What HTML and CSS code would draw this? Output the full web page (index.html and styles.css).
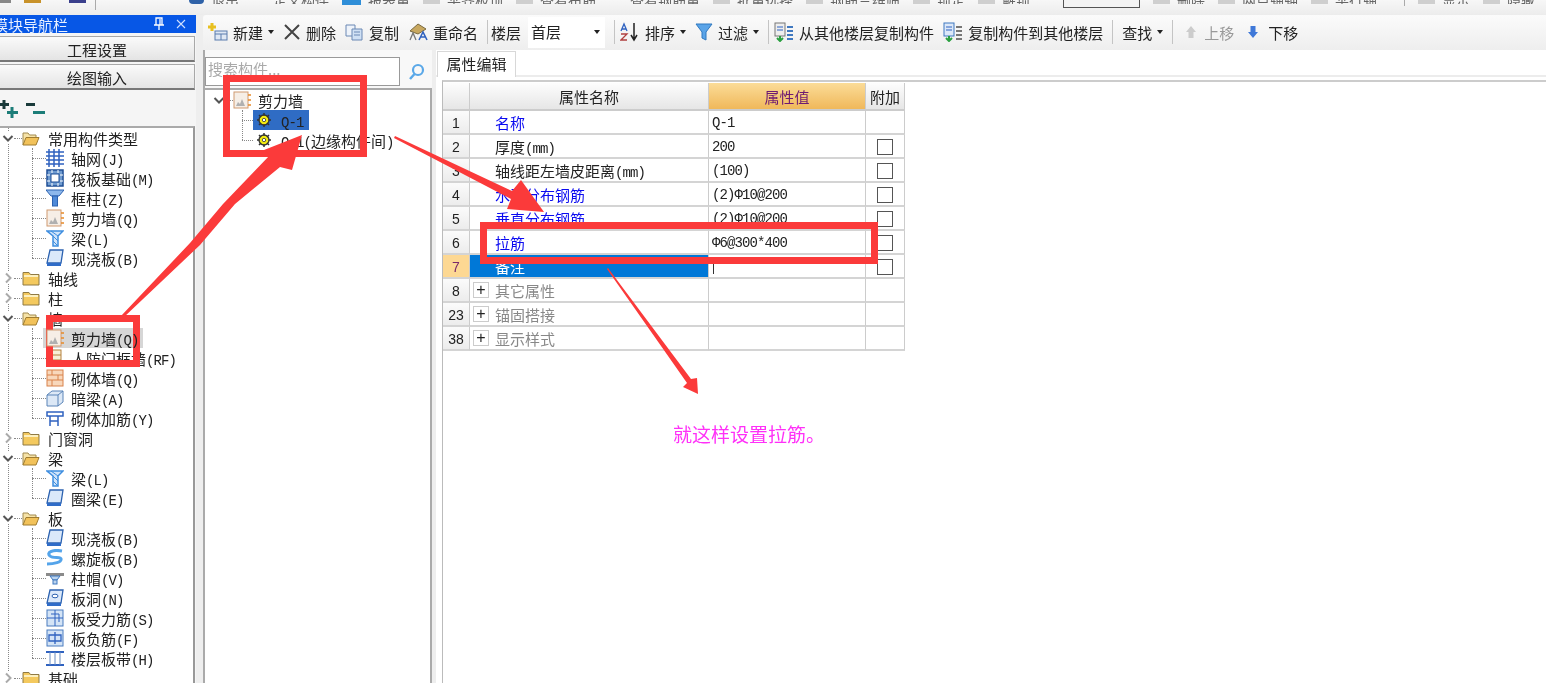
FILE: index.html
```html
<!DOCTYPE html>
<html lang="zh-CN">
  <head>
    <meta charset="UTF-8" />
    <title>模块导航栏</title>
    <link rel="stylesheet" href="styles.css">
  </head>
  <body>
    <svg class="defs" width="0" height="0">
      <symbol id="folder-open" viewBox="0 0 18 18">
        <path d="M1 16V4h5l1.500 2H14v3" fill="#f6e3a8" stroke="#a08a50"/>
        <path d="M1 16 4 8.500h13L14 16z" fill="#f2c25a" stroke="#a07c30"/>
      </symbol>
      <symbol id="folder" viewBox="0 0 18 18">
        <path d="M1 16V3.500h6L8.500 5.500H17V16z" fill="#f4c95e" stroke="#8f7a45"/>
        <path d="M2 7h14" stroke="#fdf0c0" stroke-width="2"/>
      </symbol>
      <symbol id="grid" viewBox="0 0 18 18">
        <path d="M0 3h18M0 7h18M0 11h18M0 15h18M3 0v18M8 0v18M13 0v18" stroke="#2f62c0" stroke-width="1.500" fill="none"/>
      </symbol>
      <symbol id="raft" viewBox="0 0 18 18">
        <rect x="1" y="1" width="16" height="16" fill="#6f9bd0" stroke="#1f4f96" stroke-width="1.500"/>
        <rect x="5" y="5" width="8" height="8" fill="#fff" stroke="#1f4f96"/>
        <path d="M1 6h3M1 12h3M14 6h3M14 12h3M6 1v3M12 1v3M6 14v3M12 14v3" stroke="#fff"/>
      </symbol>
      <symbol id="column" viewBox="0 0 18 18">
        <path d="M0 1h18l-5 6H5z" fill="#8db8ec" stroke="#2c62b0"/>
        <rect x="6.500" y="7" width="5" height="10" fill="#4f8ad8" stroke="#2c62b0"/>
      </symbol>
      <symbol id="wall" viewBox="0 0 18 18">
        <rect x="1" y="1" width="14" height="16" fill="#f6eee6" stroke="#d09a70"/>
        <path d="M3 15l2-4 2 2 2-5 3 7z" fill="#b0b0b0"/>
        <path d="M15 4h3M15 9h3M15 14h3" stroke="#e88a2a" stroke-width="1.500"/>
      </symbol>
      <symbol id="beam" viewBox="0 0 18 18">
        <path d="M1 2h16l-5 5v10H7V7z" fill="#cfe4fa" stroke="#3f8ee0" stroke-width="1.500"/>
        <path d="M7 7l5 5M7 12l5 5M5 2l7 5" stroke="#3f8ee0"/>
      </symbol>
      <symbol id="slab" viewBox="0 0 18 18">
        <path d="M4 1h13l-2 13H1z" fill="#dbe9fa" stroke="#2c62b0" stroke-width="1.300"/>
        <path d="M1 14h14v3H1z" fill="#2f6cc8"/>
      </symbol>
      <symbol id="door" viewBox="0 0 18 18">
        <rect x="3" y="1" width="12" height="16" fill="#f8efd8" stroke="#b5823e"/>
        <path d="M3 6h12M3 11h12" stroke="#b5823e"/>
      </symbol>
      <symbol id="brick" viewBox="0 0 18 18">
        <rect x="1" y="1" width="16" height="16" fill="#f8d8bc" stroke="#d9824a"/>
        <path d="M1 6h16M1 11h16M6 1v5M12 6v5M6 11v6" stroke="#d9824a"/>
      </symbol>
      <symbol id="dark-beam" viewBox="0 0 18 18">
        <path d="M1 6l5-4h11v11l-5 4H1z" fill="#dce8f6" stroke="#5a84b8"/>
        <path d="M1 6h11v11M12 6l5-4" fill="none" stroke="#5a84b8"/>
      </symbol>
      <symbol id="masonry" viewBox="0 0 18 18">
        <path d="M1 3h16v4H1zM4 7v10M12 7v10M4 12h8" fill="none" stroke="#2f62c0" stroke-width="1.500"/>
      </symbol>
      <symbol id="spiral" viewBox="0 0 18 18">
        <path d="M16 2C6 0 0 4 4 7c3 3 11 0 11 3 1 3-7 5-14 5" fill="none" stroke="#54a4ea" stroke-width="3"/>
      </symbol>
      <symbol id="cap" viewBox="0 0 18 18">
        <rect x="0" y="4" width="18" height="3" fill="#8a8a8a"/>
        <path d="M4 7h10l-3 4H7z" fill="#bcd4ee" stroke="#3f78c0"/>
        <rect x="7" y="11" width="4" height="4" fill="#bcd4ee" stroke="#3f78c0"/>
      </symbol>
      <symbol id="hole" viewBox="0 0 18 18">
        <path d="M4 1h13l-2 13H1z" fill="#dbe9fa" stroke="#2c62b0" stroke-width="1.300"/>
        <path d="M1 14h14v3H1z" fill="#2f6cc8"/>
        <ellipse cx="9" cy="7" rx="3" ry="1.800" fill="#fff" stroke="#2c62b0"/>
      </symbol>
      <symbol id="slab-bar" viewBox="0 0 18 18">
        <rect x="1" y="1" width="16" height="16" fill="#d4e4f6" stroke="#4a7cc0"/>
        <path d="M1 9h16M9 1v16M5 5h8v8" fill="none" stroke="#2f62c0"/>
      </symbol>
      <symbol id="neg-bar" viewBox="0 0 18 18">
        <rect x="1" y="1" width="16" height="16" fill="#d4e4f6" stroke="#4a7cc0"/>
        <path d="M3 6h12v6H3zM9 3v12" fill="none" stroke="#2f62c0" stroke-width="1.300"/>
      </symbol>
      <symbol id="band" viewBox="0 0 18 18">
        <path d="M0 3h18M0 16h18" stroke="#2f62c0" stroke-width="2"/>
        <path d="M4 3v13M9 3v13M14 3v13" stroke="#6a8cc0"/>
      </symbol>
      <symbol id="gear" viewBox="0 0 14 14">
        <circle cx="7" cy="7" r="5" fill="#f2ea10" stroke="#333" stroke-width="1.300"/>
        <circle cx="7" cy="7" r="1.700" fill="#fff" stroke="#333" stroke-width=".8"/>
        <path d="M7 0v2.500M7 11.500V14M0 7h2.500M11.500 7H14M2 2l2 2M10 10l2 2M12 2l-2 2M4 10l-2 2" stroke="#333" stroke-width="1.500"/>
      </symbol>
      <symbol id="open-chev" viewBox="0 0 12 12">
        <path d="M1.500 4 6 8.500 10.500 4" fill="none" stroke="#555" stroke-width="2"/>
      </symbol>
      <symbol id="shut-chev" viewBox="0 0 12 12">
        <path d="M4 1.500 8.500 6 4 10.500" fill="none" stroke="#aaa" stroke-width="2"/>
      </symbol>
    </svg>

    <div class="app">
      <!-- 顶部工具栏，只露出底边 -->
      <div class="strip">
        <i class="chip chip-gray"></i>
        <i class="chip chip-amber"></i>
        <i class="chip chip-navy"></i>
        <i class="strip-sep"></i>
        <i class="chip chip-swoosh"></i>
        <span class="strip-text">退出</span>
        <span class="strip-text far">定义构件</span>
        <i class="chip chip-blue"></i>
        <span class="strip-text">报表量</span>
        <i class="chip chip-pale"></i>
        <span class="strip-text">平齐板顶</span>
        <i class="chip chip-pale"></i>
        <span class="strip-text">查看布筋</span>
        <span class="strip-text far">查看钢筋量</span>
        <i class="chip chip-pale"></i>
        <span class="strip-text">批量选择</span>
        <i class="chip chip-pale"></i>
        <span class="strip-text">钢筋三维筛</span>
        <i class="chip chip-pale"></i>
        <span class="strip-text">锁定</span>
        <i class="chip chip-pale"></i>
        <span class="strip-text">解锁</span>
        <span class="strip-combo"></span>
        <i class="chip chip-pale"></i>
        <span class="strip-text">删除</span>
        <i class="chip chip-pale"></i>
        <span class="strip-text">两点辅轴</span>
        <i class="chip chip-pale"></i>
        <span class="strip-text">平行辅</span>
        <i class="strip-sep strip-sep-far"></i>
        <i class="chip chip-pale"></i>
        <span class="strip-text">显示</span>
        <i class="chip chip-pale"></i>
        <span class="strip-text">隐藏</span>
      </div>

      <div class="main">
        <!-- 模块导航栏 -->
        <div class="nav">
          <div class="nav-title">
            <span class="nav-name">模块导航栏</span>
            <span class="nav-pin">
              <svg width="12" height="14" viewBox="0 0 12 14"><path d="M3 1h6v7H3zM1 8h10M6 8v5M7 2v6" fill="none" stroke="#fff" stroke-width="1.300"/></svg>
            </span>
            <span class="nav-close">
              <svg width="10" height="10" viewBox="0 0 10 10"><path d="M1 1l8 8M9 1l-8 8" stroke="#cfe0ff" stroke-width="1.100"/></svg>
            </span>
          </div>
          <div class="nav-btn">工程设置</div>
          <div class="nav-btn">绘图输入</div>
          <div class="nav-icons">
            <svg width="18" height="18" viewBox="0 0 18 18"><path d="M4 0v9M0 4.500h9" stroke="#1a3a3a" stroke-width="3"/><path d="M12 7v11M7 12.500h11" stroke="#1c7d78" stroke-width="3"/></svg>
            <svg width="20" height="18" viewBox="0 0 20 18"><path d="M1 4.500h9" stroke="#1a3a3a" stroke-width="3"/><path d="M8 12.500h12" stroke="#1c7d78" stroke-width="3"/></svg>
          </div>

          <div class="tree tree-root">
            <div class="row"><svg class="chev"><use href="#open-chev"/></svg><i class="dash"></i><svg class="ico"><use href="#folder-open"/></svg><span class="label">常用构件类型</span></div>
            <div class="kids">
              <div class="leaf"><i class="stem"></i><svg class="ico"><use href="#grid"/></svg><span class="label">轴网<b>(J)</b></span></div>
              <div class="leaf"><i class="stem"></i><svg class="ico"><use href="#raft"/></svg><span class="label">筏板基础<b>(M)</b></span></div>
              <div class="leaf"><i class="stem"></i><svg class="ico"><use href="#column"/></svg><span class="label">框柱<b>(Z)</b></span></div>
              <div class="leaf"><i class="stem"></i><svg class="ico"><use href="#wall"/></svg><span class="label">剪力墙<b>(Q)</b></span></div>
              <div class="leaf"><i class="stem"></i><svg class="ico"><use href="#beam"/></svg><span class="label">梁<b>(L)</b></span></div>
              <div class="leaf"><i class="stem"></i><svg class="ico"><use href="#slab"/></svg><span class="label">现浇板<b>(B)</b></span></div>
            </div>
            <div class="row"><svg class="chev"><use href="#shut-chev"/></svg><i class="dash"></i><svg class="ico"><use href="#folder"/></svg><span class="label">轴线</span></div>
            <div class="row"><svg class="chev"><use href="#shut-chev"/></svg><i class="dash"></i><svg class="ico"><use href="#folder"/></svg><span class="label">柱</span></div>
            <div class="row"><svg class="chev"><use href="#open-chev"/></svg><i class="dash"></i><svg class="ico"><use href="#folder-open"/></svg><span class="label">墙</span></div>
            <div class="kids">
              <div class="leaf leaf-hover"><i class="stem"></i><svg class="ico"><use href="#wall"/></svg><span class="label">剪力墙<b>(Q)</b></span></div>
              <div class="leaf"><i class="stem"></i><svg class="ico"><use href="#door"/></svg><span class="label">人防门框墙<b>(RF)</b></span></div>
              <div class="leaf"><i class="stem"></i><svg class="ico"><use href="#brick"/></svg><span class="label">砌体墙<b>(Q)</b></span></div>
              <div class="leaf"><i class="stem"></i><svg class="ico"><use href="#dark-beam"/></svg><span class="label">暗梁<b>(A)</b></span></div>
              <div class="leaf"><i class="stem"></i><svg class="ico"><use href="#masonry"/></svg><span class="label">砌体加筋<b>(Y)</b></span></div>
            </div>
            <div class="row"><svg class="chev"><use href="#shut-chev"/></svg><i class="dash"></i><svg class="ico"><use href="#folder"/></svg><span class="label">门窗洞</span></div>
            <div class="row"><svg class="chev"><use href="#open-chev"/></svg><i class="dash"></i><svg class="ico"><use href="#folder-open"/></svg><span class="label">梁</span></div>
            <div class="kids">
              <div class="leaf"><i class="stem"></i><svg class="ico"><use href="#beam"/></svg><span class="label">梁<b>(L)</b></span></div>
              <div class="leaf"><i class="stem"></i><svg class="ico"><use href="#slab"/></svg><span class="label">圈梁<b>(E)</b></span></div>
            </div>
            <div class="row"><svg class="chev"><use href="#open-chev"/></svg><i class="dash"></i><svg class="ico"><use href="#folder-open"/></svg><span class="label">板</span></div>
            <div class="kids">
              <div class="leaf"><i class="stem"></i><svg class="ico"><use href="#slab"/></svg><span class="label">现浇板<b>(B)</b></span></div>
              <div class="leaf"><i class="stem"></i><svg class="ico"><use href="#spiral"/></svg><span class="label">螺旋板<b>(B)</b></span></div>
              <div class="leaf"><i class="stem"></i><svg class="ico"><use href="#cap"/></svg><span class="label">柱帽<b>(V)</b></span></div>
              <div class="leaf"><i class="stem"></i><svg class="ico"><use href="#hole"/></svg><span class="label">板洞<b>(N)</b></span></div>
              <div class="leaf"><i class="stem"></i><svg class="ico"><use href="#slab-bar"/></svg><span class="label">板受力筋<b>(S)</b></span></div>
              <div class="leaf"><i class="stem"></i><svg class="ico"><use href="#neg-bar"/></svg><span class="label">板负筋<b>(F)</b></span></div>
              <div class="leaf"><i class="stem"></i><svg class="ico"><use href="#band"/></svg><span class="label">楼层板带<b>(H)</b></span></div>
            </div>
            <div class="row"><svg class="chev"><use href="#shut-chev"/></svg><i class="dash"></i><svg class="ico"><use href="#folder"/></svg><span class="label">基础</span></div>
          </div>
        </div>

        <div class="content">
          <!-- 构件工具栏 -->
          <div class="toolbar">
            <span class="tool">
              <svg width="20" height="20" viewBox="0 0 20 20"><path d="M4 1v8M0 5h8" stroke="#e8c020" stroke-width="3"/><rect x="7" y="9" width="12" height="9" fill="#dfe8f4" stroke="#5a7cae"/><path d="M7 12h12M13 12v6" stroke="#5a7cae"/></svg>
              新建<i class="caret"></i>
            </span>
            <span class="tool">
              <svg width="18" height="18" viewBox="0 0 18 18"><path d="M2 2l14 14M16 2L2 16" stroke="#444" stroke-width="2"/></svg>
              删除
            </span>
            <span class="tool">
              <svg width="19" height="18" viewBox="0 0 19 18"><path d="M1 2h9v11H1z" fill="#eef3fa" stroke="#6a88b4"/><path d="M7 6h10v11H7z" fill="#cfe0f4" stroke="#6a88b4"/><path d="M9 9h6M9 12h6" stroke="#6a88b4"/></svg>
              复制
            </span>
            <span class="tool">
              <svg width="20" height="20" viewBox="0 0 20 20"><path d="M2 9l8-7 8 5-8 5z" fill="#c8a860" stroke="#7a6a40"/><path d="M2 18l3-7 3 7" fill="none" stroke="#777" stroke-width="1.300"/><path d="M11 18l4-8 4 8M12.500 15h5" fill="none" stroke="#2f62c0" stroke-width="1.600"/></svg>
              重命名
            </span>
            <i class="tool-sep"></i>
            <span class="floor-label">楼层</span>
            <span class="combo"><span>首层</span><i class="caret"></i></span>
            <i class="tool-sep"></i>
            <span class="tool">
              <svg width="20" height="20" viewBox="0 0 20 20"><path d="M1 9l3-7 3 7M2 7h4" fill="none" stroke="#2f62c0" stroke-width="1.300"/><path d="M1 12h6l-6 6h6" fill="none" stroke="#b04040" stroke-width="1.300"/><path d="M14 1v16M11 13l3 5 3-5" fill="none" stroke="#222" stroke-width="1.500"/></svg>
              排序<i class="caret"></i>
            </span>
            <span class="tool">
              <svg width="18" height="18" viewBox="0 0 18 18"><path d="M1 1h16l-6 8v8l-4-2V9z" fill="#5aa4e8" stroke="#2f78c0"/></svg>
              过滤<i class="caret"></i>
            </span>
            <i class="tool-sep"></i>
            <span class="tool">
              <svg width="20" height="20" viewBox="0 0 20 20"><rect x="1" y="1" width="10" height="13" fill="#eee" stroke="#777"/><path d="M3 5h6M3 8h6" stroke="#2f62c0"/><path d="M6 14v5M3 16l3 3 3-3" fill="none" stroke="#2aa040" stroke-width="2"/><path d="M13 5h6M13 9h6M13 13h6M13 17h6" stroke="#3f78c0" stroke-width="2"/></svg>
              从其他楼层复制构件
            </span>
            <span class="tool">
              <svg width="20" height="20" viewBox="0 0 20 20"><rect x="1" y="1" width="10" height="13" fill="#dce8f8" stroke="#3f78c0"/><path d="M3 5h6M3 8h6" stroke="#2f62c0"/><path d="M6 14v5M3 16l3 3 3-3" fill="none" stroke="#2aa040" stroke-width="2"/><path d="M13 5h6M13 9h6M13 13h6M13 17h6" stroke="#777" stroke-width="2"/></svg>
              复制构件到其他楼层
            </span>
            <i class="tool-sep"></i>
            <span class="tool tool-find">查找<i class="caret"></i></span>
            <i class="tool-sep"></i>
            <span class="tool tool-up">
              <svg width="14" height="14" viewBox="0 0 14 14"><path d="M7 1l5 6H9.500v6h-5V7H2z" fill="#ccc"/></svg>
              上移
            </span>
            <span class="tool tool-down">
              <svg width="14" height="14" viewBox="0 0 14 14"><path d="M7 13l5-6H9.500V1h-5v6H2z" fill="#3f78d8"/></svg>
              下移
            </span>
          </div>

          <div class="panes">
            <!-- 构件列表 -->
            <div class="comp">
              <div class="search">
                <span class="search-box">搜索构件...</span>
                <svg width="18" height="18" viewBox="0 0 18 18"><circle cx="10" cy="7" r="5" fill="none" stroke="#5aa8e8" stroke-width="2.200"/><path d="M6.500 11L2 16" stroke="#5aa8e8" stroke-width="2.500"/></svg>
              </div>
              <div class="tree comp-tree">
                <div class="row"><svg class="chev"><use href="#open-chev"/></svg><i class="dash"></i><svg class="ico"><use href="#wall"/></svg><span class="label">剪力墙</span></div>
                <div class="comp-kids">
                  <div class="comp-leaf"><i class="stem"></i><span class="comp-item comp-on"><svg class="gear"><use href="#gear"/></svg><span class="label"><b>Q-1</b></span></span></div>
                  <div class="comp-leaf"><i class="stem"></i><span class="comp-item"><svg class="gear"><use href="#gear"/></svg><span class="label"><b>Q-1(</b>边缘构件间<b>)</b></span></span></div>
                </div>
              </div>
            </div>

            <!-- 属性编辑 -->
            <div class="props">
              <div class="tabs"><span class="tab">属性编辑</span></div>
              <div class="sheet">
                <table class="grid">
                  <colgroup>
                    <col class="col-no" />
                    <col class="col-name" />
                    <col class="col-val" />
                    <col class="col-add" />
                  </colgroup>
                  <tr class="head">
                    <th class="no"></th>
                    <th>属性名称</th>
                    <th class="val-head">属性值</th>
                    <th>附加</th>
                  </tr>
                  <tr>
                    <td class="no">1</td>
                    <td class="name link">名称</td>
                    <td class="val">Q-1</td>
                    <td></td>
                  </tr>
                  <tr>
                    <td class="no">2</td>
                    <td class="name">厚度<b>(mm)</b></td>
                    <td class="val">200</td>
                    <td><span class="check"></span></td>
                  </tr>
                  <tr>
                    <td class="no">3</td>
                    <td class="name">轴线距左墙皮距离<b>(mm)</b></td>
                    <td class="val">(100)</td>
                    <td><span class="check"></span></td>
                  </tr>
                  <tr>
                    <td class="no">4</td>
                    <td class="name link">水平分布钢筋</td>
                    <td class="val">(2)Φ10@200</td>
                    <td><span class="check"></span></td>
                  </tr>
                  <tr>
                    <td class="no">5</td>
                    <td class="name link">垂直分布钢筋</td>
                    <td class="val">(2)Φ10@200</td>
                    <td><span class="check"></span></td>
                  </tr>
                  <tr>
                    <td class="no">6</td>
                    <td class="name link">拉筋</td>
                    <td class="val">Φ6@300*400</td>
                    <td><span class="check"></span></td>
                  </tr>
                  <tr class="current">
                    <td class="no">7</td>
                    <td class="name">备注</td>
                    <td class="val"><i class="cursor"></i></td>
                    <td><span class="check"></span></td>
                  </tr>
                  <tr class="group">
                    <td class="no">8</td>
                    <td class="name"><span class="expand">+</span>其它属性</td>
                    <td></td>
                    <td></td>
                  </tr>
                  <tr class="group">
                    <td class="no">23</td>
                    <td class="name"><span class="expand">+</span>锚固搭接</td>
                    <td></td>
                    <td></td>
                  </tr>
                  <tr class="group">
                    <td class="no">38</td>
                    <td class="name"><span class="expand">+</span>显示样式</td>
                    <td></td>
                    <td></td>
                  </tr>
                </table>
              </div>
            </div>
          </div>
        </div>
      </div>

      <!-- 红色标注 -->
      <svg class="marks" width="1546" height="683" viewBox="0 0 1546 683">
        <g fill="none" stroke="#fb3a3a" stroke-width="7">
          <rect x="226.500" y="78.500" width="137" height="75"/>
          <rect x="49.500" y="318.500" width="87" height="45"/>
          <rect x="483.500" y="225.500" width="391" height="35"/>
        </g>
        <g fill="#fb3a3a">
          <polygon points="121,316 190,243 223,204 270,155 264,150 302,135 292,170 280,167 235,204 200,245 123,318"/>
          <polygon points="395,136 512,191 521,180 544,212 507,209 511,199 394,138"/>
          <polygon points="608,268 691,379 697,378 698,394 683,387 687,383 607,269"/>
        </g>
      </svg>
      <div class="note">就这样设置拉筋。</div>
    </div>
  </body>
</html>
```

FILE: styles.css
```css
html,
body {
  margin: 0;
  height: 100%;
  overflow: hidden;
  background: #fff;
}

body {
  font-family: "Noto Sans CJK SC", "Liberation Sans", sans-serif;
  font-size: 15px;
  color: #222;
}

.defs {
  position: absolute;
}

.app {
  position: relative;
  width: 1546px;
  height: 683px;
  overflow: hidden;
  display: flex;
  flex-direction: column;
  filter: blur(0.35px);
}

/* Top strip */
.strip {
  height: 15px;
  flex: none;
  display: flex;
  align-items: flex-start;
  gap: 7px;
  overflow: hidden;
  background: linear-gradient(to bottom, #f7f7f7, #ececec);
}

.chip {
  flex: none;
  width: 17px;
  height: 3px;
}

.chip-gray {
  width: 11px;
  background: #888;
}

.chip-amber {
  margin-left: 6px;
  background: #c8922a;
}

.chip-navy {
  margin-left: 21px;
  background: #3a3f8c;
}

.chip-swoosh {
  margin-left: 86px;
  width: 15px;
  height: 4px;
  background: #2f62a8;
  border-radius: 0 0 8px 8px;
}

.chip-blue {
  width: 19px;
  height: 5px;
  margin-left: 6px;
  background: #2f8ed8;
}

.chip-pale {
  margin-left: 6px;
  height: 4px;
  background: #cfcfcf;
}

.strip-sep {
  flex: none;
  width: 1px;
  height: 10px;
  margin-left: 2px;
  background: #aaa;
}

.strip-sep-far {
  height: 6px;
  margin-left: 20px;
}

.strip-text {
  flex: none;
  height: 4px;
  overflow: hidden;
  font-size: 14px;
  line-height: 0;
  color: #666;
}

.far {
  margin-left: 27px;
}

.strip-combo {
  flex: none;
  width: 77px;
  height: 8px;
  margin-left: 26px;
  box-sizing: border-box;
  border: 1px solid #555;
  border-top: none;
  background: #f4f4f4;
}

.main {
  flex: 1;
  display: flex;
  min-height: 0;
  background: #eeeeee;
}

b {
  font-family: "Liberation Mono", monospace;
  font-weight: normal;
  font-size: 14px;
  letter-spacing: -0.9px;
  line-height: 1;
}

/* Navigation */
.nav {
  width: 196px;
  flex: none;
  display: flex;
  flex-direction: column;
  background: #f5f5f5;
}

.nav-title {
  height: 18px;
  display: flex;
  align-items: center;
  background: #0757e6;
  color: #e8f0ff;
  overflow: hidden;
}

.nav-name {
  flex: none;
  margin-left: -7px;
  width: 160px;
  white-space: nowrap;
}

.nav-pin {
  display: flex;
  width: 18px;
}

.nav-close {
  display: flex;
  margin-left: 5px;
}

.nav-btn {
  height: 26px;
  margin: 2px 1px 0 0;
  box-sizing: border-box;
  border: 1px solid #a8a8a8;
  border-left: none;
  border-bottom: 2px solid #777;
  background: linear-gradient(to bottom, #fafafa, #e4e4e4);
  text-align: center;
  line-height: 25px;
  font-size: 15px;
}

.nav-title + .nav-btn {
  margin-top: 3px;
}

.nav-icons {
  height: 36px;
  display: flex;
  align-items: center;
  gap: 7px;
  padding-top: 2px;
  box-sizing: border-box;
}

.tree {
  flex: 1;
  position: relative;
  background: #fff;
  overflow: hidden;
}

.tree-root {
  margin-right: 1px;
  border-top: 2px solid #aaa;
  border-right: 2px solid #999;
}

/* Root guide */
.tree-root::before {
  content: "";
  position: absolute;
  left: 8px;
  top: 0;
  bottom: 0;
  border-left: 1px dotted #888;
}

.row,
.leaf,
.comp-leaf {
  height: 20px;
  display: flex;
  align-items: center;
  position: relative;
  white-space: nowrap;
}

.row {
  padding-left: 2px;
}

.chev {
  width: 12px;
  height: 12px;
  flex: none;
  background: #fff;
  position: relative;
}

.dash {
  width: 8px;
  flex: none;
  border-top: 1px dotted #888;
}

.ico {
  width: 18px;
  height: 18px;
  flex: none;
  margin-right: 8px;
}

.kids {
  position: relative;
}

.kids::before {
  content: "";
  position: absolute;
  left: 32px;
  top: 0;
  bottom: 10px;
  border-left: 1px dotted #888;
}

.leaf {
  padding-left: 32px;
}

.leaf .ico {
  margin-right: 7px;
}

.stem {
  width: 14px;
  flex: none;
  border-top: 1px dotted #888;
}

.leaf-hover::after {
  content: "";
  position: absolute;
  left: 43px;
  top: 0;
  width: 100px;
  height: 100%;
  background: #d6d6d6;
  z-index: 0;
}

.leaf-hover .ico,
.leaf-hover .label {
  position: relative;
  z-index: 1;
}

/* Toolbar */
.toolbar {
  height: 35px;
  margin-left: 7px;
  flex: none;
  display: flex;
  align-items: center;
  gap: 9px;
  padding: 0 0 1px 5px;
  box-sizing: border-box;
  border-radius: 3px 0 0 0;
  background: linear-gradient(to bottom, #fbfbfb, #eeeeee);
  white-space: nowrap;
}

.tool {
  display: flex;
  align-items: center;
  gap: 5px;
  flex: none;
}

.tool-find {
  margin-left: 4px;
}

.tool-up {
  margin-left: 6px;
  gap: 6px;
  color: #999;
}

.tool-down {
  margin-left: 3px;
  gap: 8px;
}

.tool-sep {
  width: 1px;
  height: 24px;
  flex: none;
  margin-right: -4px;
  background: #c4c4c4;
}

.floor-label {
  margin-left: -2px;
}

.caret {
  width: 0;
  height: 0;
  border: 3.5px solid transparent;
  border-top: 4px solid #222;
  border-bottom: none;
}

.combo {
  width: 77px;
  height: 31px;
  margin-left: -2px;
  box-sizing: border-box;
  display: flex;
  align-items: center;
  justify-content: space-between;
  padding: 0 5px 0 3px;
  background: #fff;
}

.combo span {
  position: relative;
  top: -1px;
}

.content {
  flex: 1;
  min-width: 0;
  display: flex;
  flex-direction: column;
}

.panes {
  flex: 1;
  display: flex;
  min-height: 0;
}

/* Component list */
.comp {
  width: 229px;
  margin-left: 7px;
  flex: none;
  display: flex;
  flex-direction: column;
  background: #f8f8f8;
  border-left: 2px solid #aaa;
  box-sizing: border-box;
}

.search {
  height: 38px;
  flex: none;
  display: flex;
  align-items: flex-end;
  gap: 8px;
  padding-bottom: 2px;
  box-sizing: border-box;
}

.search svg {
  margin-bottom: 5px;
}

.search-box {
  width: 195px;
  height: 29px;
  box-sizing: border-box;
  border: 1px solid #999;
  background: #fff;
  color: #aaa;
  line-height: 22px;
  padding-left: 2px;
}

.comp-tree {
  border: 2px solid #aaa;
  border-left: none;
  border-bottom: none;
  padding: 0 0 0 8px;
}

.comp-tree .dash {
  width: 8px;
}

.comp-tree .row {
  padding-left: 0;
}

.comp-tree .ico {
  margin-right: 7px;
}

.comp-kids {
  position: relative;
}

.comp-kids::before {
  content: "";
  position: absolute;
  left: 29px;
  top: 0;
  bottom: 10px;
  border-left: 1px dotted #888;
}

.comp-leaf {
  padding-left: 29px;
}

.comp-leaf .stem {
  width: 11px;
}

.comp-item {
  display: flex;
  align-items: center;
  height: 20px;
  padding: 0 4px;
}

.comp-on {
  width: 56px;
  box-sizing: border-box;
  background: #2f6cc4;
}

.gear {
  width: 14px;
  height: 14px;
  margin-right: 10px;
  flex: none;
}

.label {
  padding-top: 1px;
  line-height: 19px;
}

/* Properties */
.props {
  flex: 1;
  min-width: 0;
  margin-left: 4px;
  background: #fff;
  display: flex;
  flex-direction: column;
}

.tabs {
  height: 27px;
  flex: none;
  box-sizing: border-box;
  padding: 1px 0 0 1px;
  display: flex;
  border-bottom: 2px solid #ececec;
}

.tab {
  width: 79px;
  height: 26px;
  box-sizing: border-box;
  text-align: center;
  line-height: 24px;
  background: #fff;
  border: 1px solid #d8d8d8;
  border-bottom: none;
}

.sheet {
  flex: 1;
  margin: 3px 0 0 6px;
  border-top: 2px solid #ccc;
  border-left: 1px solid #bbb;
  padding-top: 1px;
}

.grid {
  table-layout: fixed;
  width: 462px;
  border-collapse: separate;
  border-spacing: 0;
}

.col-no {
  width: 27px;
}

.col-name {
  width: 239px;
}

.col-val {
  width: 157px;
}

.col-add {
  width: 39px;
}

.grid th,
.grid td {
  box-sizing: border-box;
  height: 24px;
  padding: 2px 0 0;
  border-right: 1px solid #ccc;
  border-bottom: 2px solid #d4d4d4;
  font-weight: normal;
  text-align: center;
  white-space: nowrap;
  line-height: 18px;
}

.grid .head th {
  height: 28px;
  border-bottom-color: #ccc;
  background: linear-gradient(to bottom, #fdfdfd, #e6e6e6);
}

.grid .head .val-head {
  background: linear-gradient(to bottom, #fbdc98, #f0b85a);
  color: #6e1a72;
}

.grid .no {
  background: linear-gradient(to bottom, #fbfbfb, #ececec);
  font-family: "Liberation Sans", sans-serif;
  font-size: 14px;
}

.grid .name {
  text-align: left;
  padding-left: 25px;
}

.grid .val {
  text-align: left;
  padding-left: 3px;
  font-family: "Liberation Mono", "Noto Sans CJK SC", monospace;
  font-size: 14px;
  letter-spacing: -0.9px;
}

.grid .link {
  color: #0a0af0;
}

.grid .current .no {
  background: #fdd893;
  color: #7a2a6a;
}

.grid .current .name {
  background: #0078d7;
  color: #fff;
}

.cursor {
  display: block;
  width: 1px;
  height: 14px;
  margin-left: 1px;
  background: #333;
}

.check {
  display: block;
  width: 16px;
  height: 16px;
  margin: 0 auto;
  box-sizing: border-box;
  border: 1px solid #555;
}

.grid .group .name {
  color: #888;
  padding-left: 3px;
}

.expand {
  display: inline-block;
  width: 16px;
  height: 16px;
  margin-right: 6px;
  box-sizing: border-box;
  border: 1px solid #ccc;
  color: #222;
  font-family: "Liberation Sans", sans-serif;
  font-size: 16px;
  line-height: 14px;
  text-align: center;
  vertical-align: top;
}

/* Annotations */
.marks {
  position: absolute;
  left: 0;
  top: 0;
}

.note {
  position: absolute;
  left: 673px;
  top: 421px;
  font-size: 19px;
  line-height: 26px;
  color: #ff30f8;
  white-space: nowrap;
}
```
